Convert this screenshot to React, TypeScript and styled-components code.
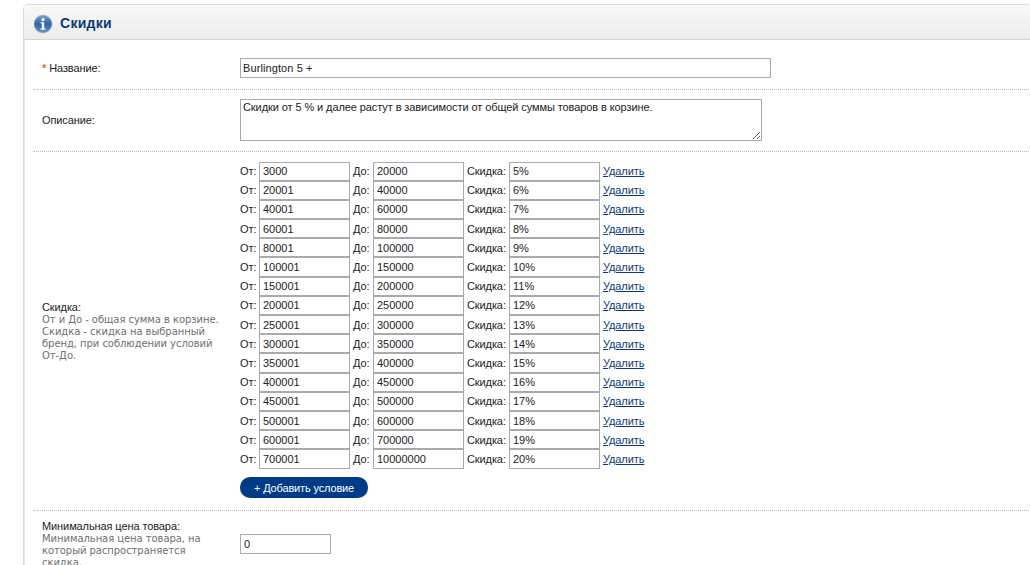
import React from "react";
import styled, { createGlobalStyle } from "styled-components";

const Global = createGlobalStyle`
  html, body { margin: 0; padding: 0; height: 565px; overflow: hidden; background: #fff; }
  body { font-family: "Liberation Sans", Arial, sans-serif; font-size: 11px; letter-spacing: -0.1px; color: #222; }
`;
const Page = styled.div`
  height: 565px;
  overflow: hidden;
  padding: 4px 0 0 23px;
`;
const Panel = styled.section`
  margin-right: -2px;
  border: 1px solid #ddd;
  border-radius: 5px 5px 0 0;
  box-shadow: inset 1px 0 0 #e6e6e6;
`;
const Header = styled.header`
  height: 35px;
  display: flex;
  align-items: center;
  gap: 7px;
  padding: 3px 0 0 9px;
  box-sizing: border-box;
  background: linear-gradient(#f8f8f8, #ececec);
  border-bottom: 1px solid #d4d4d4;
  border-radius: 4px 4px 0 0;
`;
const Title = styled.h2`
  margin: -1px 0 0;
  font: bold 14px "Liberation Sans", Arial, sans-serif;
  letter-spacing: 0.3px;
  color: #0b3b78;
`;
const Body = styled.div`
  padding: 0 0 0 9px;
`;
const Row = styled.div<{ $h: number; $pt?: number; $pb?: number }>`
  display: grid;
  grid-template-columns: 207px 1fr;
  align-items: center;
  padding-top: ${(p) => p.$pt ?? 0}px;
  padding-bottom: ${(p) => p.$pb ?? 0}px;
  min-height: ${(p) => p.$h - (p.$pt ?? 0) - (p.$pb ?? 0)}px;
  border-bottom: 1px dotted #bbb;
  &:last-child { border-bottom: none; }
`;
const Label = styled.div`
  padding-left: 9px;
  line-height: 14px;
`;
const Star = styled.span`
  color: #f26522;
  font-weight: bold;
`;
const Hint = styled.div`
  font: 10px/12px "DejaVu Sans", Verdana, sans-serif;
  letter-spacing: -0.06px;
  color: #6f6f6f;
  width: 180px;
`;
const TextInput = styled.input<{ $w: number }>`
  box-sizing: border-box;
  width: ${(p) => p.$w}px;
  height: 20px;
  padding: 1px 2px 0;
  border: 1px solid #aaa;
  background: #fff;
  font: 11px "Liberation Sans", Arial, sans-serif;
  letter-spacing: 0.1px;
  color: #222;
  outline: none;
`;
const CondInput = styled(TextInput)`
  height: 19.2px;
  padding: 0 2px 0 3px;
  letter-spacing: 0;
`;
const Area = styled.textarea`
  display: block;
  box-sizing: border-box;
  width: 522px;
  height: 42px;
  padding: 1px 2px;
  border: 1px solid #aaa;
  font: 11px "Liberation Sans", Arial, sans-serif;
  letter-spacing: -0.09px;
  color: #222;
  resize: both;
  outline: none;
`;
const Conditions = styled.div`
  display: grid;
  grid-auto-rows: 19.2px;
  padding-top: 9px;
`;
const Cond = styled.div`
  display: flex;
  align-items: center;
  white-space: nowrap;
`;
const CondLabel = styled.span<{ $w: number; $ml?: number }>`
  width: ${(p) => p.$w}px;
  margin-left: ${(p) => p.$ml ?? 0}px;
`;
const RemoveLink = styled.a`
  margin-left: 3px;
  color: #0b3b78;
  text-decoration: underline;
`;
const AddButton = styled.button`
  display: block;
  width: 128px;
  height: 21px;
  margin: 8px 0 12px;
  padding: 1px 0 0;
  border: 0;
  border-radius: 10px;
  background: #003b87;
  color: #fff;
  font: 11px "Liberation Sans", Arial, sans-serif;
  letter-spacing: -0.15px;
`;

const InfoIcon = () => (
  <svg width="20" height="20" viewBox="0 0 20 20" aria-hidden="true">
    <defs>
      <linearGradient id="ig" x1="0" y1="0" x2="0" y2="1">
        <stop offset="0" stopColor="#7da2cf" />
        <stop offset="0.5" stopColor="#2f62a3" />
        <stop offset="1" stopColor="#6a98ce" />
      </linearGradient>
    </defs>
    <circle cx="10" cy="10" r="9" fill="url(#ig)" stroke="#9db4d0" strokeWidth="0.6" />
    <circle cx="10" cy="5.6" r="1.6" fill="#fff" />
    <path d="M7.6 8.3h3.6v6.2h1.2v1.2H7.6v-1.2h1.2V9.5H7.6z" fill="#fff" />
  </svg>
);

const rows = [
  ["3000", "20000", "5%"], ["20001", "40000", "6%"], ["40001", "60000", "7%"], ["60001", "80000", "8%"],
  ["80001", "100000", "9%"], ["100001", "150000", "10%"], ["150001", "200000", "11%"], ["200001", "250000", "12%"],
  ["250001", "300000", "13%"], ["300001", "350000", "14%"], ["350001", "400000", "15%"], ["400001", "450000", "16%"],
  ["450001", "500000", "17%"], ["500001", "600000", "18%"], ["600001", "700000", "19%"], ["700001", "10000000", "20%"],
];

export default function App() {
  return (
    <Page>
      <Global />
      <Panel>
        <Header>
          <InfoIcon />
          <Title>Скидки</Title>
        </Header>
        <Body>
          <Row $h={49} $pt={6}>
            <Label><Star>*</Star> Название:</Label>
            <div><TextInput $w={531} defaultValue="Burlington 5 +" /></div>
          </Row>
          <Row $h={61} $pb={1}>
            <Label>Описание:</Label>
            <div><Area defaultValue="Скидки от 5 % и далее растут в зависимости от общей суммы товаров в корзине." /></div>
          </Row>
          <Row $h={358}>
            <Label>
              Скидка:
              <Hint>От и До - общая сумма в корзине. Скидка - скидка на выбранный бренд, при соблюдении условий От-До.</Hint>
            </Label>
            <div>
              <Conditions>
                {rows.map((r) => (
                  <Cond key={r[0]}>
                    <CondLabel $w={19}>От:</CondLabel>
                    <CondInput $w={91} defaultValue={r[0]} />
                    <CondLabel $w={20} $ml={3}>До:</CondLabel>
                    <CondInput $w={91} defaultValue={r[1]} />
                    <CondLabel $w={42} $ml={3}>Скидка:</CondLabel>
                    <CondInput $w={91} defaultValue={r[2]} />
                    <RemoveLink href="#">Удалить</RemoveLink>
                  </Cond>
                ))}
              </Conditions>
              <AddButton>+ Добавить условие</AddButton>
            </div>
          </Row>
          <Row $h={66}>
            <Label>
              Минимальная цена товара:
              <Hint>Минимальная цена товара, на который распространяется скидка.</Hint>
            </Label>
            <div><CondInput as={TextInput} $w={91} defaultValue="0" /></div>
          </Row>
        </Body>
      </Panel>
    </Page>
  );
}
